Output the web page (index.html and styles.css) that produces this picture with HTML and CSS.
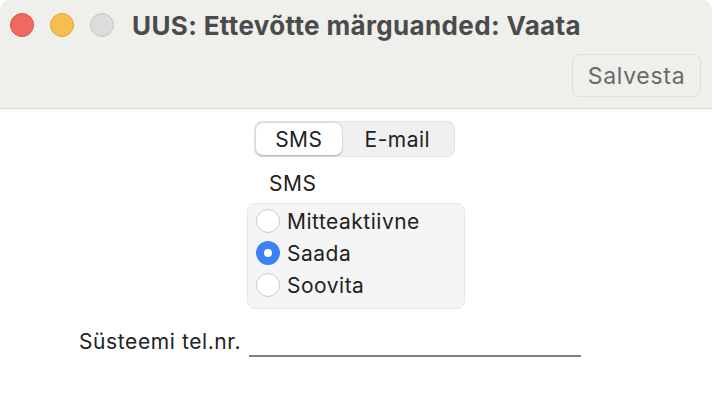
FILE: index.html
```html
<!DOCTYPE html>
<html>
<head>
<meta charset="utf-8">
<link rel="stylesheet" href="styles.css">
</head>
<body>
<div class="window">
  <header class="titlebar">
    <div class="title-row">
      <div class="lights">
        <span class="light red"></span>
        <span class="light yellow"></span>
        <span class="light gray"></span>
      </div>
      <h1 class="title">UUS: Ettevõtte märguanded: Vaata</h1>
    </div>
    <div class="toolbar">
      <button class="save">Salvesta</button>
    </div>
  </header>
  <main class="content">
    <div class="segmented">
      <span class="seg active">SMS</span>
      <span class="seg">E-mail</span>
    </div>
    <div class="section">
      <div class="section-label">SMS</div>
      <div class="radio-box">
        <label class="radio"><span class="dot"></span>Mitteaktiivne</label>
        <label class="radio"><span class="dot on"></span>Saada</label>
        <label class="radio"><span class="dot"></span>Soovita</label>
      </div>
    </div>
    <div class="field">
      <span class="field-label">Süsteemi tel.nr.</span>
      <span class="field-line"></span>
    </div>
  </main>
</div>
</body>
</html>
```
FILE: styles.css
```css
* { box-sizing: border-box; }
html, body { margin: 0; padding: 0; background: #ffffff; }
body { font-family: Inter, "Liberation Sans", Arial, sans-serif; width: 712px; height: 404px; overflow: hidden; }
.window { width: 712px; height: 404px; background: #fff; border-radius: 10px 10px 0 0; overflow: hidden; }
.titlebar { height: 109px; background: #eff0ec; border-bottom: 1px solid #d9d9d6; display: flex; flex-direction: column; }
.title-row { display: flex; align-items: center; height: 50px; padding-left: 10px; }
.lights { display: flex; gap: 16px; }
.light { width: 24px; height: 24px; border-radius: 50%; display: block; }
.red { background: #ee6a5f; border: 1px solid #d85248; }
.yellow { background: #f6be4f; border: 1px solid #dea23a; }
.gray { background: #dcdcda; border: 1px solid #c4c4c2; }
.title { margin: 0 0 0 18px; font-size: 26px; font-weight: 700; color: #4b4b4b; letter-spacing: 0.35px; }
.toolbar { display: flex; justify-content: flex-end; padding: 4px 11px 0 0; }
.save { font-family: inherit; font-size: 23px; letter-spacing: 0.7px; color: #6a6a6a; background: #eff0ec; border: 1px solid #dedfdb; border-radius: 8px; height: 43px; width: 129px; padding: 0; }
.content { display: flex; flex-direction: column; align-items: center; padding-top: 12px; height: 295px; }
.segmented { display: flex; background: #f0f0f0; border: 1px solid #e3e3e3; border-radius: 8px; height: 36px; width: 201px; padding: 1px; margin-right: 3px; }
.seg { display: flex; align-items: center; justify-content: center; font-size: 21px; letter-spacing: 0.5px; color: #222; width: 113px; }
.seg.active { width: 87px; background: #fff; border-radius: 7px; box-shadow: 0 0.5px 2px rgba(0,0,0,0.3); }
.section { display: flex; flex-direction: column; align-items: flex-start; margin-top: 8px; }
.section-label { font-size: 21px; letter-spacing: 0.5px; color: #222; padding-left: 22px; height: 28px; line-height: 38px; }
.radio-box { margin-top: 10px; width: 218px; height: 106px; background: #f5f5f5; border: 1px solid #e6e6e6; border-radius: 8px; padding: 1px 0 0 8px; display: flex; flex-direction: column; }
.radio { display: flex; align-items: center; gap: 7px; font-size: 21px; letter-spacing: 0.5px; color: #222; height: 32px; }
.dot { width: 24px; height: 24px; border-radius: 50%; background: #fff; border: 1px solid #c9c9c9; display: block; flex: none; }
.dot.on { border: 8px solid #3b82f6; background: #fff; }
.field { display: flex; align-items: flex-end; align-self: flex-start; margin: 20px 0 0 79px; }
.field-label { font-size: 21px; letter-spacing: 0.6px; color: #222; }
.field-line { display: block; width: 332px; height: 2px; background: #808080; margin: 0 0 -3px 8px; }
```
